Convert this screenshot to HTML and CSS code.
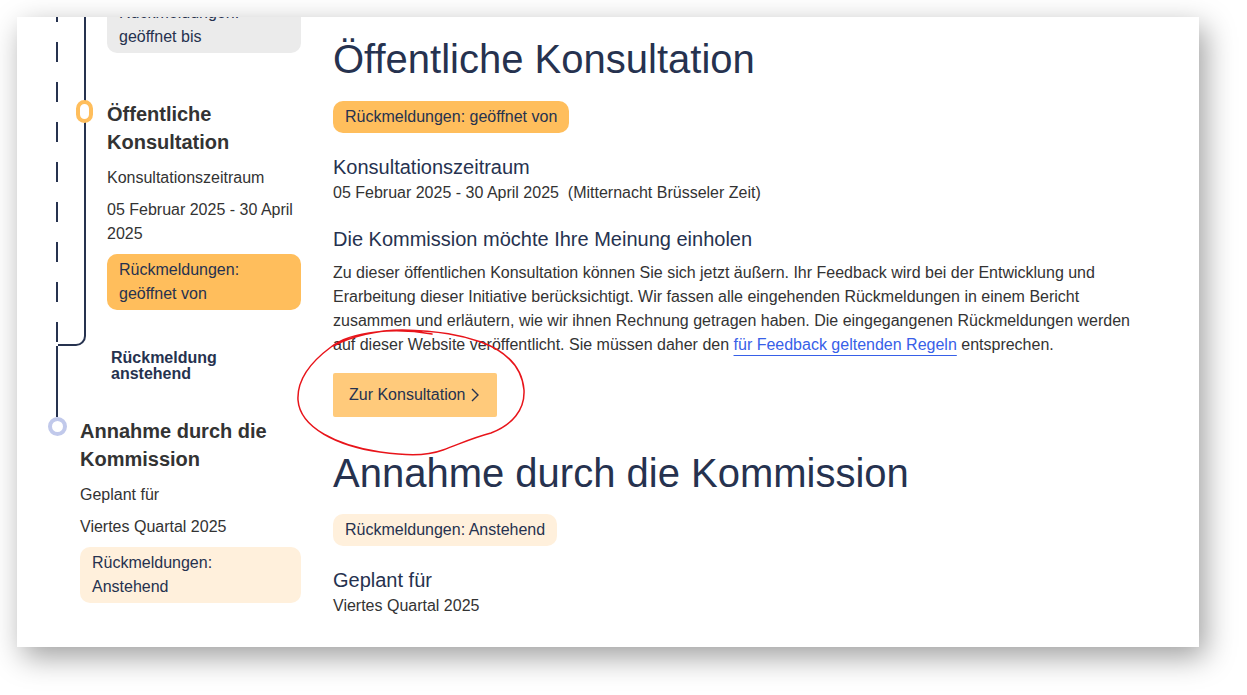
FILE: index.html
```html
<!DOCTYPE html>
<html lang="de">

<head>
    <meta charset="UTF-8">
    <meta name="viewport" content="width=device-width, initial-scale=1.0">
    <title>Öffentliche Konsultation</title>
    <link rel="stylesheet" href="styles.css">
</head>

<body>
    <div class="card">
        <aside class="timeline">
            <div class="stage">
                <div class="rail-dashed"></div>
                <div class="rail-branch"></div>
                <div class="stage-content">
                    <div class="box box-closed">Rückmeldungen:<br>geöffnet bis</div>
                    <div class="step step-current">
                        <span class="marker marker-current"></span>
                        <h2 class="step-title">Öffentliche Konsultation</h2>
                        <p class="step-text">Konsultationszeitraum</p>
                        <p class="step-text">05 Februar 2025 - 30 April 2025</p>
                        <div class="box box-open">Rückmeldungen:<br>geöffnet von</div>
                    </div>
                </div>
            </div>

            <div class="pending">Rückmeldung<br>anstehend</div>

            <div class="step step-next">
                <span class="marker marker-next"></span>
                <h2 class="step-title">Annahme durch die Kommission</h2>
                <p class="step-text">Geplant für</p>
                <p class="step-text">Viertes Quartal 2025</p>
                <div class="box box-pending">Rückmeldungen:<br>Anstehend</div>
            </div>
        </aside>

        <main class="content">
            <section class="phase">
                <h1 class="phase-title">Öffentliche Konsultation</h1>
                <div class="status status-open">Rückmeldungen: geöffnet von</div>

                <h3 class="label">Konsultationszeitraum</h3>
                <p class="value">05 Februar 2025 - 30 April 2025&nbsp; (Mitternacht Brüsseler Zeit)</p>

                <h3 class="label label-intro">Die Kommission möchte Ihre Meinung einholen</h3>
                <p class="intro">Zu dieser öffentlichen Konsultation können Sie sich jetzt äußern. Ihr Feedback wird bei der
                    Entwicklung und Erarbeitung dieser Initiative berücksichtigt. Wir fassen alle eingehenden Rückmeldungen in
                    einem Bericht zusammen und erläutern, wie wir ihnen Rechnung getragen haben. Die eingegangenen
                    Rückmeldungen werden auf dieser Website veröffentlicht. Sie müssen daher den <a href="#">für Feedback
                    geltenden Regeln</a> entsprechen.</p>

                <button class="cta">
                    Zur Konsultation
                    <svg width="8" height="14" viewBox="0 0 8 14">
                        <polyline points="1,1 7,7 1,13" fill="none" stroke="#26324f" stroke-width="1.4" />
                    </svg>
                </button>
            </section>

            <section class="phase phase-next">
                <h1 class="phase-title">Annahme durch die Kommission</h1>
                <div class="status status-pending">Rückmeldungen: Anstehend</div>

                <h3 class="label">Geplant für</h3>
                <p class="value">Viertes Quartal 2025</p>
            </section>
        </main>
    </div>

    <!-- hand drawn marker around the button -->
    <svg class="annotation" width="1247" height="695" viewBox="0 0 1247 695">
        <path d="M432,334 C398,328 352,330 331,347 C308,364 297,382 298,400 C300,428 338,446 380,452
                 C402,455 424,457 443,450 C462,443 472,438 491,433 C512,425 525,410 524,390
                 C522,366 505,351 481,342 C461,335 440,331 402,330 C378,330 352,336 333,346"
              fill="none" stroke="#e8141a" stroke-width="1.5" stroke-linecap="round" />
    </svg>
</body>

</html>
```

FILE: styles.css
```css
body {
    box-sizing: border-box;
    min-height: 100vh;
    margin: 0;
    padding: 17px;
    background-color: #fff;
    font-family: "Liberation Sans", Arial, sans-serif;
    font-size: 16px;
    line-height: 24px;
    color: #333;
}

.card {
    display: flex;
    width: 1182px;
    height: 630px;
    overflow: hidden;
    background-color: #fff;
    box-shadow: 6px 10px 28px rgba(0, 0, 0, 0.38);
}

/* timeline on the left */
.timeline {
    flex-shrink: 0;
    width: 284px;
    margin-top: -20px;
}

.stage {
    display: flex;
}

.rail-dashed {
    width: 2px;
    margin-left: 39px;
    background: repeating-linear-gradient(to bottom, transparent 0 5px, #26324f 5px 25px, transparent 25px 40px);
}

.rail-branch {
    width: 28px;
    box-sizing: border-box;
    border-right: 2px solid #26324f;
    border-bottom: 2px solid #26324f;
    border-bottom-right-radius: 10px;
}

.stage-content {
    width: 194px;
    margin-left: 21px;
    padding-bottom: 36px;
}

.step {
    position: relative;
}

.step-current {
    margin-top: 47px;
}

.step-next {
    width: 221px;
    margin-left: 63px;
}

.marker {
    position: absolute;
    top: 0;
    box-sizing: border-box;
    background-color: #fff;
}

.marker-current {
    left: -31px;
    width: 17px;
    height: 23px;
    border: 4px solid #ffbe5c;
    border-radius: 9px;
}

.marker-next {
    left: -32px;
    width: 19px;
    height: 19px;
    border: 4px solid #c1c9eb;
    border-radius: 50%;
}

.step-title {
    margin: 0;
    font-size: 20px;
    line-height: 28px;
    font-weight: bold;
    color: #333;
}

.step-text {
    margin: 10px 0 0;
}

.step-text + .step-text {
    margin-top: 8px;
}

.box {
    padding: 4px 12px;
    border-radius: 10px;
    color: #26324f;
}

.step .box {
    margin-top: 8px;
}

.box-closed {
    background-color: #ebebeb;
}

.box-open {
    background-color: #ffbe5c;
}

.box-pending {
    background-color: #fff0dc;
}

.pending {
    margin-left: 39px;
    padding: 4px 0 35px 53px;
    border-left: 2px solid #26324f;
    font-weight: bold;
    line-height: 16px;
    color: #26324f;
}

/* main column */
.content {
    width: 810px;
    margin-left: 32px;
    padding-top: 18px;
}

.phase-next {
    margin-top: 32px;
}

.phase-title {
    margin: 0;
    font-size: 40px;
    line-height: 48px;
    font-weight: normal;
    color: #26324f;
}

.status {
    width: fit-content;
    margin-top: 18px;
    padding: 4px 12px;
    border-radius: 10px;
    color: #26324f;
}

.status-open {
    background-color: #ffbe5c;
}

.status-pending {
    margin-top: 17px;
    background-color: #fff0dc;
}

.label {
    margin: 22px 0 0;
    font-size: 20px;
    line-height: 24px;
    font-weight: normal;
    color: #26324f;
}

.label-intro {
    margin: 22px 0 10px;
}

.value {
    margin: 2px 0 0;
}

.intro {
    margin: 0;
}

.intro a {
    color: #3760e8;
    text-decoration: underline;
    text-decoration-thickness: 1px;
    text-underline-offset: 5px;
}

.cta {
    display: flex;
    align-items: center;
    gap: 5px;
    margin-top: 16px;
    padding: 10px 18px 10px 16px;
    border: none;
    border-radius: 2px;
    background-color: #ffca7b;
    font-family: inherit;
    font-size: 16px;
    line-height: 24px;
    color: #26324f;
    cursor: pointer;
}

.annotation {
    position: absolute;
    top: 0;
    left: 0;
    pointer-events: none;
}
```
